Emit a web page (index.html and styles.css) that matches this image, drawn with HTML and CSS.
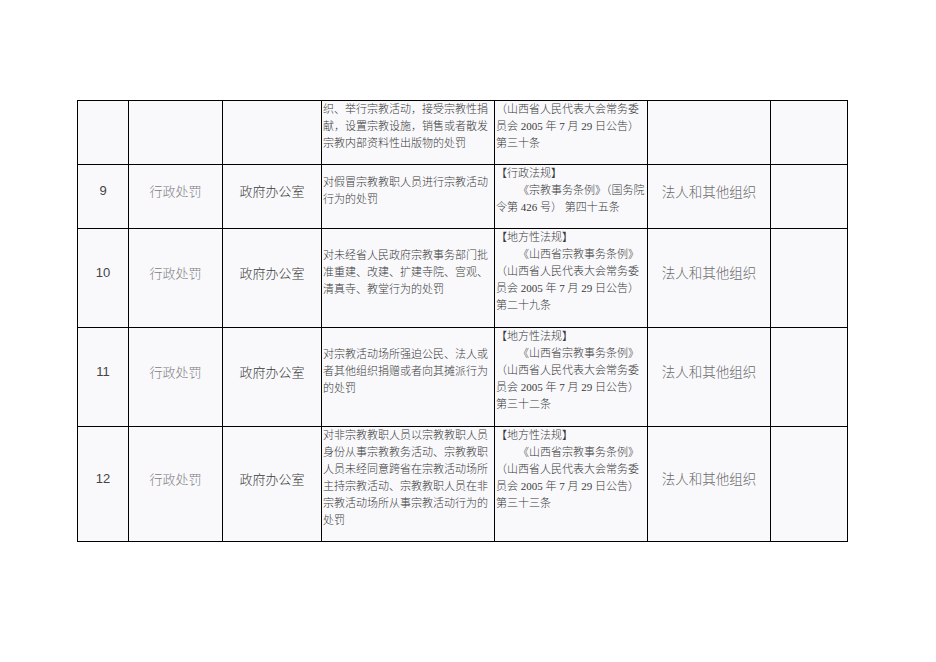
FILE: index.html
```html
<!DOCTYPE html>
<html lang="zh-CN">
<head>
<meta charset="utf-8">
<title>行政处罚事项表</title>
<link rel="stylesheet" href="styles.css">
</head>
<body>
<div class="page">
<table class="grid">
<colgroup>
<col class="c1"><col class="c2"><col class="c3"><col class="c4"><col class="c5"><col class="c6"><col class="c7">
</colgroup>
<tr class="r-a">
<td></td><td></td><td></td>
<td class="desc top">织、举行宗教活动，接受宗教性捐<br>献，设置宗教设施，销售或者散发<br>宗教内部资料性出版物的处罚</td>
<td class="law">（山西省人民代表大会常务委<br>员会 2005 年 7 月 29 日公告）<br>第三十条</td>
<td></td><td></td>
</tr>
<tr class="r-b">
<td class="num">9</td><td class="kind">行政处罚</td><td class="dept">政府办公室</td>
<td class="desc">对假冒宗教教职人员进行宗教活动<br>行为的处罚</td>
<td class="law">【行政法规】<br><span class="ind">《宗教事务条例》（国务院</span><br>令第 426 号）&nbsp;第四十五条</td>
<td class="obj">法人和其他组织</td><td></td>
</tr>
<tr class="r-c">
<td class="num">10</td><td class="kind">行政处罚</td><td class="dept">政府办公室</td>
<td class="desc">对未经省人民政府宗教事务部门批<br>准重建、改建、扩建寺院、宫观、<br>清真寺、教堂行为的处罚</td>
<td class="law">【地方性法规】<br><span class="ind">《山西省宗教事务条例》</span><br>（山西省人民代表大会常务委<br>员会 2005 年 7 月 29 日公告）<br>第二十九条</td>
<td class="obj">法人和其他组织</td><td></td>
</tr>
<tr class="r-c">
<td class="num">11</td><td class="kind">行政处罚</td><td class="dept">政府办公室</td>
<td class="desc">对宗教活动场所强迫公民、法人或<br>者其他组织捐赠或者向其摊派行为<br>的处罚</td>
<td class="law">【地方性法规】<br><span class="ind">《山西省宗教事务条例》</span><br>（山西省人民代表大会常务委<br>员会 2005 年 7 月 29 日公告）<br>第三十二条</td>
<td class="obj">法人和其他组织</td><td></td>
</tr>
<tr class="r-d">
<td class="num">12</td><td class="kind">行政处罚</td><td class="dept">政府办公室</td>
<td class="desc">对非宗教教职人员以宗教教职人员<br>身份从事宗教教务活动、宗教教职<br>人员未经同意跨省在宗教活动场所<br>主持宗教活动、宗教教职人员在非<br>宗教活动场所从事宗教活动行为的<br>处罚</td>
<td class="law">【地方性法规】<br><span class="ind">《山西省宗教事务条例》</span><br>（山西省人民代表大会常务委<br>员会 2005 年 7 月 29 日公告）<br>第三十三条</td>
<td class="obj">法人和其他组织</td><td></td>
</tr>
</table>
</div>
</body>
</html>
```

FILE: styles.css
```css
html, body {
  margin: 0;
  padding: 0;
  background: #ffffff;
}
.page {
  padding: 100px 0 0 77px;
}
.grid {
  border-collapse: collapse;
  table-layout: fixed;
  width: 770px;
  font-family: "Liberation Serif", "Noto Sans CJK SC", serif;
  font-weight: 300;
}
.c1 { width: 51px; }
.c2 { width: 94px; }
.c3 { width: 99px; }
.c4 { width: 173px; }
.c5 { width: 153px; }
.c6 { width: 123px; }
.c7 { width: 77px; }
.grid td {
  border: 1px solid #000;
  background: #f9f9fc;
  padding: 0 0 12px 0;
  vertical-align: middle;
  text-align: center;
  color: #333;
}
.r-a td { height: 51px; }
.r-b td { height: 51px; }
.r-c td { height: 86px; }
.r-d td { height: 102px; }
.grid td.desc, .grid td.law {
  font-size: 11px;
  line-height: 17px;
  text-align: left;
  white-space: nowrap;
  color: #3a3a3a;
  padding-left: 1px;
}
.grid td.law {
  vertical-align: top;
}
.grid td.top {
  vertical-align: top;
}
.ind {
  padding-left: 22px;
}
.grid td.num {
  font-family: "Liberation Sans", "Noto Sans CJK SC", sans-serif;
  font-weight: 400;
  font-size: 13px;
  color: #444;
}
.grid td.kind {
  font-family: "Noto Sans CJK SC", sans-serif;
  font-size: 13px;
  color: #808080;
}
.grid td.dept {
  font-family: "Noto Sans CJK SC", sans-serif;
  font-size: 13px;
  color: #3a3a3a;
}
.grid td.obj {
  font-family: "Noto Sans CJK SC", sans-serif;
  font-size: 13.5px;
  color: #6a6a6a;
}
```
